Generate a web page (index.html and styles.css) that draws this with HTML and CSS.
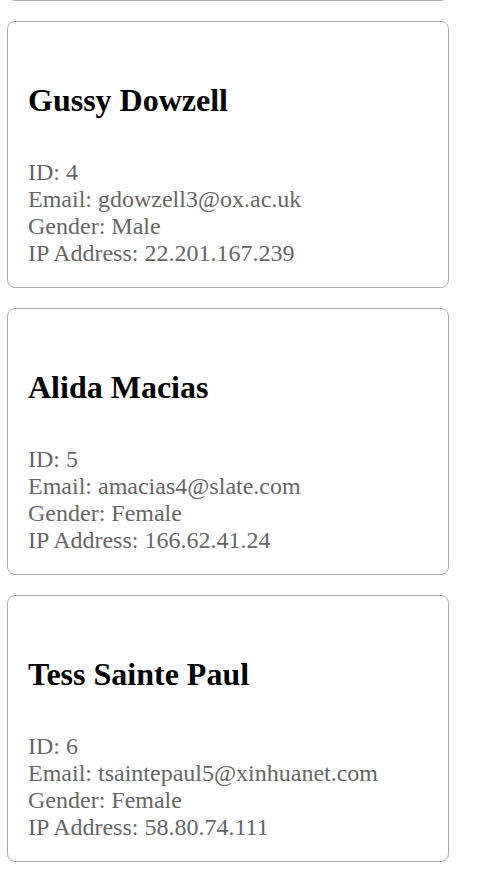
FILE: index.html
```html
<!DOCTYPE html>
<html lang="en">
<head>
<meta charset="utf-8">
<title>Users</title>
<link rel="stylesheet" href="styles.css">
</head>
<body>
<div class="list">
  <div class="card card-prev"></div>
  <div class="card">
    <h1 class="name">Gussy Dowzell</h1>
    <div class="info">
      <div>ID: 4</div>
      <div>Email: gdowzell3@ox.ac.uk</div>
      <div>Gender: Male</div>
      <div>IP Address: 22.201.167.239</div>
    </div>
  </div>
  <div class="card">
    <h1 class="name">Alida Macias</h1>
    <div class="info">
      <div>ID: 5</div>
      <div>Email: amacias4@slate.com</div>
      <div>Gender: Female</div>
      <div>IP Address: 166.62.41.24</div>
    </div>
  </div>
  <div class="card">
    <h1 class="name">Tess Sainte Paul</h1>
    <div class="info">
      <div>ID: 6</div>
      <div>Email: tsaintepaul5@xinhuanet.com</div>
      <div>Gender: Female</div>
      <div>IP Address: 58.80.74.111</div>
    </div>
  </div>
</div>
</body>
</html>
```

FILE: styles.css
```css
html, body {
  margin: 0;
  padding: 0;
  background: #ffffff;
}
body {
  font-family: "Liberation Serif", "Times New Roman", serif;
  overflow: hidden;
}
.list {
  display: flex;
  flex-direction: column;
  gap: 20px;
  margin-top: -266px;
  padding-left: 7px;
}
.card {
  width: 442px;
  box-sizing: border-box;
  border: 1px solid #aaaaaa;
  border-radius: 8px;
  padding: 20px;
}
.card-prev {
  height: 267px;
}
.name {
  font-size: 32px;
  font-weight: bold;
  color: #000000;
  margin: 40px 0 40px 0;
}
.info {
  font-size: 24px;
  color: #666666;
}
```
